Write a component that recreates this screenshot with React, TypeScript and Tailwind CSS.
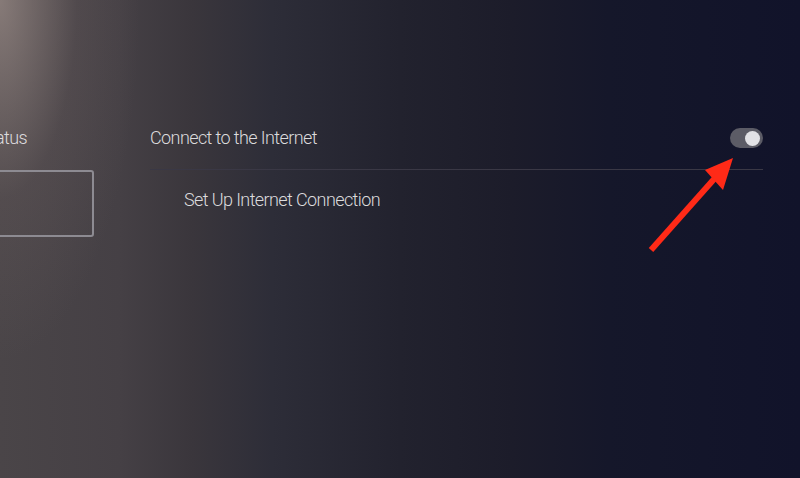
export default function App() {
  return (
    <div
      className="relative w-[800px] h-[478px] overflow-hidden bg-[radial-gradient(ellipse_140px_360px_at_0%_0%,rgba(160,145,140,0.7),rgba(120,105,105,0.2)_55%,transparent_100%),linear-gradient(to_right,#4a4548_0%,#454045_15%,#3a363c_24%,#2d2d38_34%,#22222e_50%,#1c1c2a_64%,#15172a_76%,#11132a_100%)]"
      style={{ fontFamily: 'Roboto, "Noto Sans", sans-serif' }}
    >
      <div className="flex pt-[126px]">
        <div className="ml-[-44px] w-[138px] shrink-0">
          <div className="text-[18px] leading-[24px] font-light text-[#dcdbdd] text-right pr-[67px] whitespace-nowrap tracking-[-0.6px]">Status</div>
          <div className="mt-[20px] h-[67px] border-2 border-[#8d8b92] rounded-[3px]"></div>
        </div>
        <div className="ml-[56px] w-[613px]">
          <div className="flex items-center justify-between h-[24px]">
            <span className="text-[18px] leading-[24px] font-light text-[#dcdbdd] tracking-[-0.6px]">Connect to the Internet</span>
            <div className="w-[33px] h-[20px] rounded-full bg-[#5c5c66] flex items-center justify-end pr-[3px]">
              <div className="w-[15px] h-[15px] rounded-full bg-[#e2e2e6]"></div>
            </div>
          </div>
          <div className="mt-[19px] h-px bg-[#3a3845]"></div>
          <div className="pl-[34px] pt-[18px] text-[18px] leading-[24px] font-light text-[#dcdbdd] tracking-[-0.6px]">Set Up Internet Connection</div>
        </div>
      </div>
      <svg className="absolute left-0 top-0" width="800" height="478" viewBox="0 0 800 478">
        <line x1="651" y1="250" x2="715" y2="178" stroke="#ff2a17" strokeWidth="6" strokeLinecap="butt" />
        <polygon points="733,158 705,170 723,190" fill="#ff2a17" />
      </svg>
    </div>
  );
}
